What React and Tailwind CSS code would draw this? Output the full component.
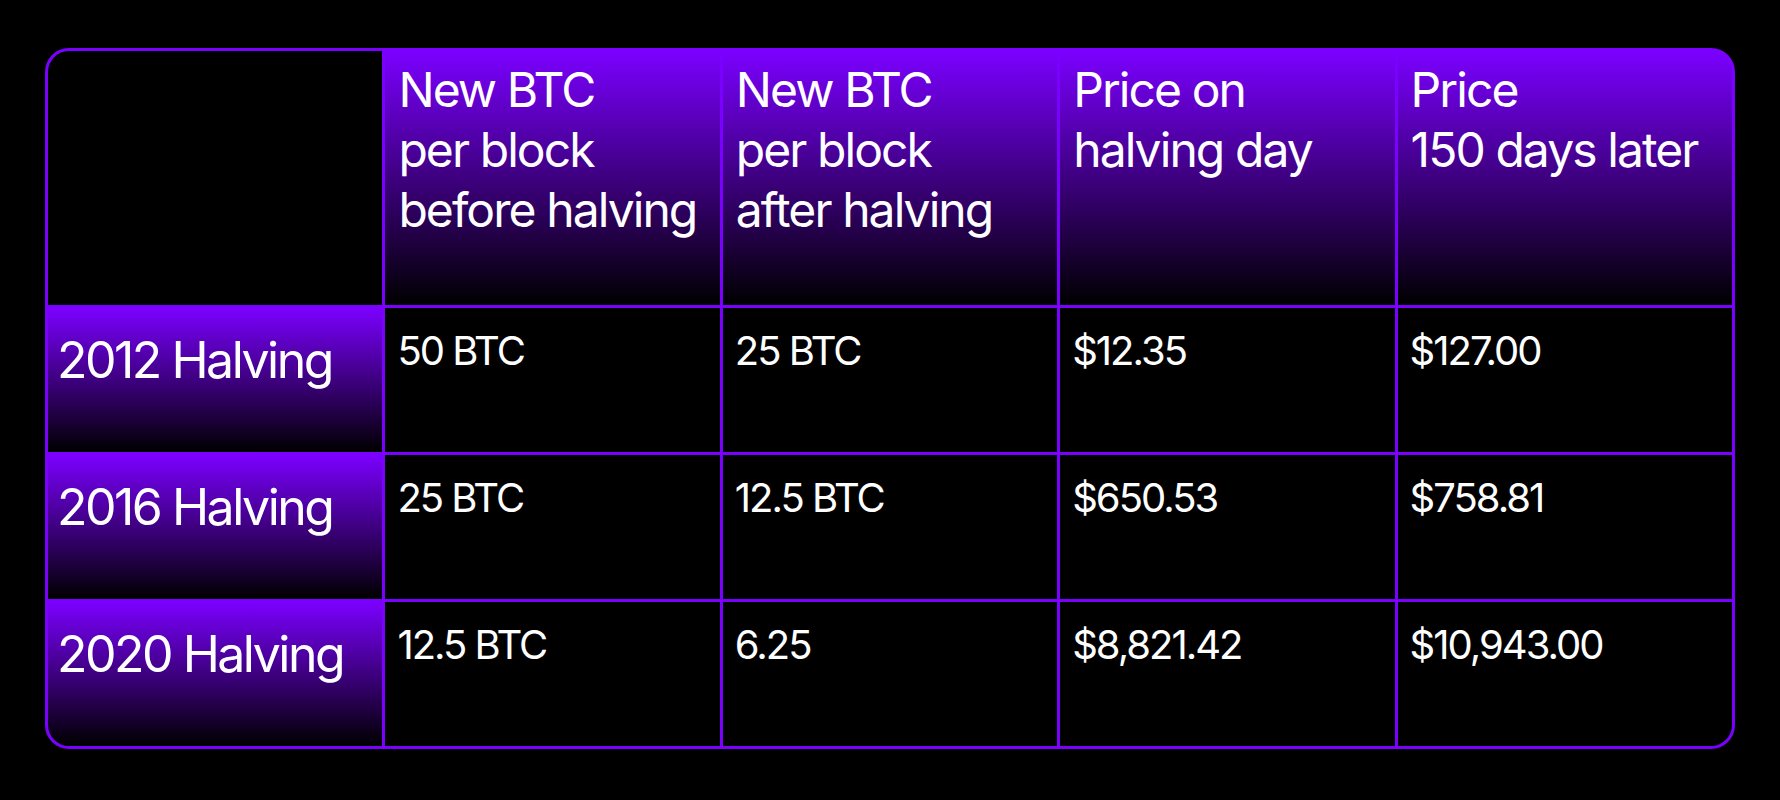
import React from 'react';

const headers = [
  ['New BTC', 'per block', 'before halving'],
  ['New BTC', 'per block', 'after halving'],
  ['Price on', 'halving day'],
  ['Price', '150 days later'],
];

const rows = [
  { label: '2012 Halving', cells: ['50 BTC', '25 BTC', '$12.35', '$127.00'] },
  { label: '2016 Halving', cells: ['25 BTC', '12.5 BTC', '$650.53', '$758.81'] },
  { label: '2020 Halving', cells: ['12.5 BTC', '6.25', '$8,821.42', '$10,943.00'] },
];

const font = { fontFamily: 'Inter, "Noto Sans", sans-serif' };

const App = () => {
  return (
    <div className="min-h-screen w-full bg-black pt-[48px] px-[45px]" style={font}>
      <div className="grid grid-cols-5 grid-rows-[254px_144px_144px_144px] gap-[3px] p-[3px] bg-[#7a00ff] rounded-[24px] text-white">
        {/* top-left empty corner */}
        <div className="bg-black rounded-tl-[21px]" />

        {headers.map((lines, i) => (
          <div
            key={i}
            className={`bg-linear-to-b/srgb from-[#7b00ff] to-black pl-[13px] pt-[9px] text-[48px] leading-[60px] tracking-[-0.04em] ${
              i === headers.length - 1 ? 'rounded-tr-[21px]' : ''
            }`}
          >
            {lines.map((l, j) => (
              <div key={j} className="whitespace-nowrap">{l}</div>
            ))}
          </div>
        ))}

        {rows.map((row, r) => (
          <React.Fragment key={row.label}>
            <div
              className={`bg-linear-to-b/srgb from-[#7b00ff] to-black pl-[9px] pt-[22px] text-[50px] leading-[60px] tracking-[-0.05em] whitespace-nowrap ${
                r === rows.length - 1 ? 'rounded-bl-[21px]' : ''
              }`}
            >
              {row.label}
            </div>
            {row.cells.map((c, i) => (
              <div
                key={i}
                className={`bg-black pl-[12px] pt-[19px] text-[40px] leading-[48px] tracking-[-0.05em] whitespace-nowrap ${
                  r === rows.length - 1 && i === row.cells.length - 1 ? 'rounded-br-[21px]' : ''
                }`}
              >
                {c}
              </div>
            ))}
          </React.Fragment>
        ))}
      </div>
    </div>
  );
};

export default App;
